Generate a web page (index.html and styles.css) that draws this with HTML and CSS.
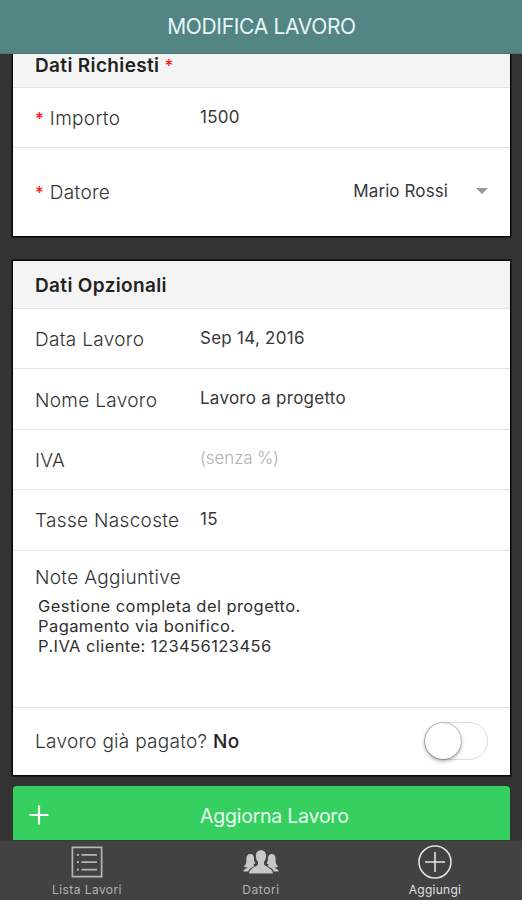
FILE: index.html
```html
<!DOCTYPE html>
<html lang="it">
<head>
<meta charset="utf-8">
<title>Modifica Lavoro</title>
<link rel="stylesheet" href="styles.css">
</head>
<body>
<div class="app">
  <header class="topbar"><h1 class="title">MODIFICA LAVORO</h1></header>
  <main class="content">
    <section class="card">
      <h2 class="card-head clipped">Dati Richiesti <span class="star">*</span></h2>
      <div class="row"><div class="label"><span class="star">*</span> Importo</div><div class="value">1500</div></div>
      <div class="row select"><div class="label"><span class="star">*</span> Datore</div><div class="value">Mario Rossi<i class="caret"></i></div></div>
    </section>
    <section class="card second">
      <h2 class="card-head">Dati Opzionali</h2>
      <div class="row"><div class="label">Data Lavoro</div><div class="value">Sep 14, 2016</div></div>
      <div class="row"><div class="label">Nome Lavoro</div><div class="value">Lavoro a progetto</div></div>
      <div class="row"><div class="label">IVA</div><div class="value placeholder">(senza %)</div></div>
      <div class="row"><div class="label">Tasse Nascoste</div><div class="value">15</div></div>
      <div class="notes">
        <div class="label">Note Aggiuntive</div>
        <div class="text">Gestione completa del progetto.<br>Pagamento via bonifico.<br>P.IVA cliente: 123456123456</div>
      </div>
      <div class="row paid"><div class="label">Lavoro già pagato? <b>No</b></div><div class="toggle"><div class="knob"></div></div></div>
    </section>
    <div class="button">
      <svg class="plus" width="20" height="20" viewBox="0 0 20 20"><path d="M10 0.5v19M0.5 10h19" stroke="#fff" stroke-width="2.2"/></svg>
      <span>Aggiorna Lavoro</span>
    </div>
  </main>
  <nav class="tabs">
    <div class="tab">
      <svg width="36" height="36" viewBox="0 0 36 36" fill="none" stroke="#b5b5b5" stroke-width="1.7"><path d="M3.4 3.400h29.200v29.200H3.400zM12.500 10.800h15.500M12.500 18.200h15.500M12.500 25.600h15.500M7.800 10.800h2.200M7.800 18.200h2.200M7.800 25.600h2.200"/></svg>
      <span>Lista Lavori</span>
    </div>
    <div class="tab datori">
      <svg width="36" height="36" viewBox="0 0 36 36" fill="#c8c8c8"><path d="M18 6.200c3.300 0 5.300 2.300 5.100 5.800-.1 2.800-.9 4.500-2.100 5.700v2.500c0 2.500 8.400 3 9 9.200H6c.6-6.200 9-6.700 9-9.200v-2.500c-1.200-1.200-2-2.900-2.100-5.700-.2-3.500 1.800-5.800 5.100-5.800z"/><path d="M7.200 9.900c-2.600 0-4 2-3.800 5 .1 3.200-.1 5.500-2.500 7.300.8 1 2.400 1.300 3.800 1.300-.7 1.100-3.800 1.100-4.500 3.900h5c1-2.600 3.400-4 6.300-5.100-.7-.7-1.200-1.300-1-2.100.9-.2 1.600-.5 2.100-1.100-1.600-1.300-1.600-3-1.600-5.100 0-2.500-1.500-4.100-3.800-4.100z"/><path d="M28.800 9.900c2.600 0 4 2 3.800 5-.1 3.200.1 5.500 2.500 7.300-.8 1-2.400 1.300-3.800 1.300.7 1.100 3.800 1.100 4.500 3.900h-5c-1-2.600-3.400-4-6.300-5.100.7-.7 1.200-1.300 1-2.100-.9-.2-1.600-.5-2.100-1.100 1.600-1.300 1.600-3 1.600-5.100 0-2.500 1.500-4.100 3.800-4.100z"/></svg>
      <span>Datori</span>
    </div>
    <div class="tab active">
      <svg width="36" height="36" viewBox="0 0 36 36" fill="none" stroke="#e2e2e2" stroke-width="1.6"><circle cx="18" cy="18" r="16"/><path d="M18 8v20M8 18h20"/></svg>
      <span>Aggiungi</span>
    </div>
  </nav>
</div>
</body>
</html>
```
FILE: styles.css
```css
* { box-sizing: border-box; }
body { margin: 0; font-family: Inter, "Liberation Sans", sans-serif; background: #333; }
.app { width: 522px; height: 900px; display: flex; flex-direction: column; overflow: hidden; background: #333; }
.topbar { flex: none; height: 54px; background: #528583; border-bottom: 1px solid #477674; display: flex; align-items: center; justify-content: center; }
.title { margin: 0; padding-left: 1px; font-size: 21px; font-weight: 400; color: #e6f5f5; letter-spacing: -0.32px; line-height: 26px; }
.content { flex: 1; min-height: 0; overflow: hidden; padding: 0 12px 0 13px; }
.card { background: #fff; box-shadow: 0 0 0 1.5px #080808; height: 182px; }
.second { margin-top: 25px; height: 514px; }
.card-head { margin: 0; height: 48px; background: #f4f4f4; border-bottom: 1px solid #e2e2e2; padding: 1px 22px 0; font-size: 19px; font-weight: 600; letter-spacing: 0.35px; color: #222; line-height: 47px; white-space: pre; }
.clipped { height: 34px; padding-top: 0; line-height: 24px; }
.star { color: #f51d1d; font-weight: 500; font-size: 17px; line-height: 1; }
.row { height: 60.4px; border-bottom: 1px solid #e4e4e4; padding: 2px 22px 0; display: grid; grid-template-columns: 165px 1fr; align-items: center; white-space: nowrap; }
.label { font-size: 19px; font-weight: 300; letter-spacing: 0.32px; color: #333; }
.value { font-size: 17px; font-weight: 400; letter-spacing: 0.26px; color: #383838; padding-bottom: 4px; }
.placeholder { color: #b0b0b0; font-weight: 300; letter-spacing: -0.1px; }
.select { height: 88px; border: 0; padding-top: 0; }
.select .value { display: flex; justify-content: flex-end; align-items: center; padding-bottom: 2px; letter-spacing: 0.1px; }
.caret { margin-left: 28px; border: 6px solid transparent; border-top: 6px solid #999; border-bottom: 0; }
.notes { height: 157.4px; border-bottom: 1px solid #e4e4e4; padding: 15px 22px 0; }
.notes .label { line-height: 24px; }
.text { padding: 6px 0 0 3px; font-size: 16.5px; letter-spacing: 0.42px; line-height: 20px; color: #303030; }
.paid { height: 66px; border: 0; grid-template-columns: 1fr auto; padding-top: 0; }
.paid b { font-weight: 500; color: #222; }
.paid .label { padding-top: 2px; letter-spacing: 0.28px; }
.toggle { width: 64px; height: 38px; border: 1.5px solid #dedede; border-radius: 19px; }
.knob { width: 36px; height: 36px; border-radius: 50%; background: #fff; box-shadow: 0 2px 4px rgba(0,0,0,.35), 0 0 1.5px rgba(0,0,0,.6); }
.button { margin-top: 11px; height: 70px; border-radius: 4px; background: #36d060; color: #e8fdee; font-size: 19.5px; letter-spacing: -0.23px; line-height: 61px; display: flex; padding-left: 16px; }
.plus { margin: 19px 151px 0 0; flex: none; }
.tabs { flex: none; height: 60px; background: #424242; display: grid; grid-template-columns: repeat(3, 1fr); border-top: 1px solid #393939; }
.tab { display: flex; flex-direction: column; align-items: center; padding-top: 3px; color: #b2b2b2; font-size: 12px; letter-spacing: 0.42px; line-height: 18px; }
.tab svg { flex: none; }
.tab span { margin-top: 1px; }
.datori { letter-spacing: 0.6px; }
.active { color: #e0e0e0; letter-spacing: 0.25px; }
```
